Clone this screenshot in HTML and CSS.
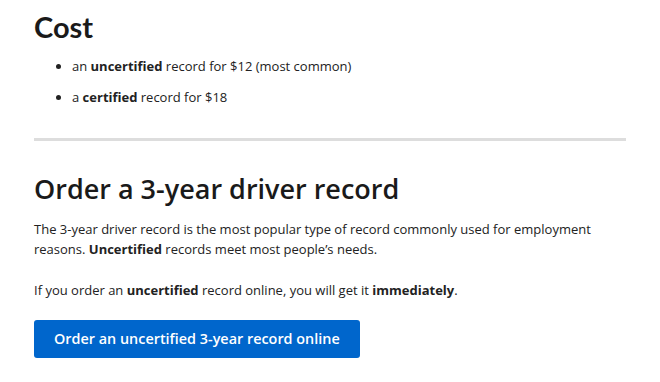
FILE: index.html
```html
<!DOCTYPE html>
<html lang="en">
<head>
    <meta charset="UTF-8">
    <title>Driver record</title>
    <link rel="stylesheet" href="styles.css">
</head>
<body>
    <div class="content">
        <h2 class="cost-title">Cost</h2>
        <ul class="cost-list">
            <li>an <strong>uncertified</strong> record for $12 (most common)</li>
            <li>a <strong>certified</strong> record for $18</li>
        </ul>
        <hr class="divider">
        <h2 class="section-title">Order a 3-year driver record</h2>
        <p>The 3-year driver record is the most popular type of record commonly used for employment reasons. <strong>Uncertified</strong> records meet most people’s needs.</p>
        <p>If you order an <strong>uncertified</strong> record online, you will get it <strong>immediately</strong>.</p>
        <a class="btn" href="#">Order an uncertified 3-year record online</a>
    </div>
</body>
</html>
```

FILE: styles.css
```css
* {
    box-sizing: border-box;
    margin: 0;
    padding: 0;
}
body {
    font-family: "Open Sans", "Noto Sans", sans-serif;
    background: #ffffff;
    color: #222222;
    font-size: 13px;
    line-height: 20px;
}
.content {
    padding: 8px 34px 0;
}
.cost-title {
    font-family: Lato, "Open Sans", sans-serif;
    font-size: 29px;
    font-weight: 700;
    line-height: 38px;
    color: #1a1a1a;
    margin-bottom: 10px;
}
.cost-list {
    list-style: disc;
    padding-left: 38px;
}
.cost-list li {
    margin-bottom: 11px;
}
strong {
    font-weight: 700;
}
.divider {
    border: none;
    height: 3px;
    background: #dddddd;
    margin: 31px 0 31px;
}
.section-title {
    font-size: 27px;
    font-weight: 600;
    line-height: 34px;
    color: #1a1a1a;
    margin-bottom: 13px;
}
p {
    margin-bottom: 21px;
}
.btn {
    display: inline-block;
    background: #0066cc;
    color: #ffffff;
    font-weight: 600;
    font-size: 14.4px;
    line-height: 20px;
    text-decoration: none;
    padding: 9px 20px;
    border-radius: 3px;
    margin-top: -1px;
}
```
